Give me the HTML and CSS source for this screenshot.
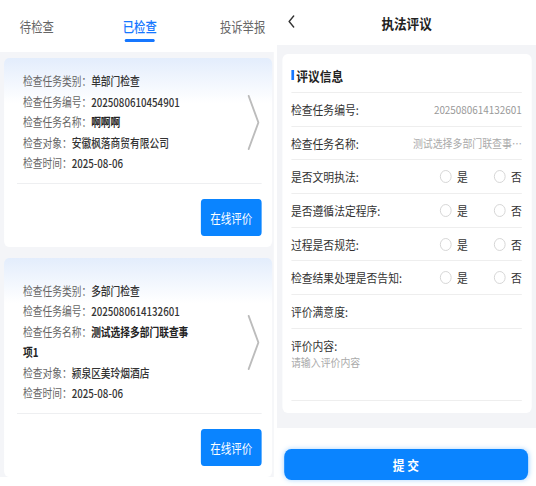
FILE: index.html
```html
<!DOCTYPE html>
<html lang="zh-CN">
<head>
<meta charset="UTF-8">
<title>执法评议</title>
<link rel="stylesheet" href="styles.css">
</head>
<body>
<div class="page">

<div class="screen screen-list">
<div class="list-inner">
<div class="tabs">
<div class="tab">待检查</div>
<div class="tab active">已检查</div>
<div class="tab">投诉举报</div>
</div>
<div class="list">
<div class="card">
<div class="card-body">
<div class="info">
<p>检查任务类别：<span class="val">单部门检查</span></p>
<p>检查任务编号：<span class="val">2025080610454901</span></p>
<p>检查任务名称：<b>啊啊啊</b></p>
<p>检查对象：<span class="val">安徽枫落商贸有限公司</span></p>
<p>检查时间：<span class="val">2025-08-06</span></p>
</div>
<svg class="arrow" viewBox="0 0 16 55"><polyline points="2,1 14,27.5 2,54" fill="none" stroke="#bcbcbc" stroke-width="2.2" stroke-linecap="round" stroke-linejoin="round"/></svg>
</div>
<div class="card-foot"><button class="btn-eval">在线评价</button></div>
</div>
<div class="card">
<div class="card-body">
<div class="info">
<p>检查任务类别：<span class="val">多部门检查</span></p>
<p>检查任务编号：<span class="val">2025080614132601</span></p>
<p>检查任务名称：<b>测试选择多部门联查事</b></p>
<p><b>项1</b></p>
<p>检查对象：<span class="val">颍泉区美玲烟酒店</span></p>
<p>检查时间：<span class="val">2025-08-06</span></p>
</div>
<svg class="arrow" viewBox="0 0 16 55"><polyline points="2,1 14,27.5 2,54" fill="none" stroke="#bcbcbc" stroke-width="2.2" stroke-linecap="round" stroke-linejoin="round"/></svg>
</div>
<div class="card-foot"><button class="btn-eval">在线评价</button></div>
</div>
</div>
</div>
</div>

<div class="screen screen-form">
<div class="form-inner">
<div class="nav">
<svg class="back" viewBox="0 0 8 13"><polyline points="6.5,1 1.5,6.5 6.5,12" fill="none" stroke="#333" stroke-width="1.6" stroke-linecap="round" stroke-linejoin="round"/></svg>
<div class="nav-title">执法评议</div>
<div></div>
</div>
<div class="form-body">
<div class="form-card">
<div class="section-title">评议信息</div>
<div class="row"><span>检查任务编号:</span><span class="value">2025080614132601</span></div>
<div class="row"><span>检查任务名称:</span><span class="value muted">测试选择多部门联查事…</span></div>
<div class="row"><span>是否文明执法:</span><div class="radios"><span class="radio"><i></i>是</span><span class="radio"><i></i>否</span></div></div>
<div class="row"><span>是否遵循法定程序:</span><div class="radios"><span class="radio"><i></i>是</span><span class="radio"><i></i>否</span></div></div>
<div class="row"><span>过程是否规范:</span><div class="radios"><span class="radio"><i></i>是</span><span class="radio"><i></i>否</span></div></div>
<div class="row"><span>检查结果处理是否告知:</span><div class="radios"><span class="radio"><i></i>是</span><span class="radio"><i></i>否</span></div></div>
<div class="row"><span>评价满意度:</span></div>
<div class="row-text">
<div>评价内容:</div>
<textarea placeholder="请输入评价内容"></textarea>
</div>
</div>
</div>
<div class="form-foot"><button class="submit">提交</button></div>
</div>
</div>

</div>
</body>
</html>
```

FILE: styles.css
```css
*{
    box-sizing:border-box;
    margin:0;
    padding:0;
}
body{
    font-family:"Noto Sans CJK SC", sans-serif;
    background:#fff;
    width:536px;
    height:486px;
    overflow:hidden;
}
.page{
    display:flex;
    gap:3px;
    height:486px;
}
.screen{
    overflow:hidden;
    flex:none;
}

/* left screen: list of checked tasks (screenshot is squeezed horizontally) */
.screen-list{
    width:274px;
    height:477px;
}
.list-inner{
    width:338px;
    height:477px;
    transform:scaleX(.81);
    transform-origin:0 0;
    display:flex;
    flex-direction:column;
}
.tabs{
    display:flex;
    height:52px;
    margin-left:-18px;
    background:#fff;
    flex:none;
}
.tab{
    flex:0 0 127px;
    text-align:center;
    font-size:14px;
    line-height:20px;
    padding-top:16px;
    color:#666;
}
.tab.active{
    color:#1677ff;
    font-weight:500;
}
.tab.active:after{
    content:'';
    display:block;
    width:37px;
    height:3px;
    border-radius:2px;
    background:#1677ff;
    margin:3px auto 0;
}
.list{
    flex:1;
    background:#f4f5f8;
    padding:6px 2px 0 5px;
    display:flex;
    flex-direction:column;
    gap:11px;
    overflow:hidden;
}
.card{
    flex:none;
    background:linear-gradient(#e3edfc, #fff 45px);
    border-radius:6px;
    padding:23px 13px 11px 0;
}
.card:first-child{
    padding-top:13px;
}
.card-body{
    display:flex;
    align-items:center;
    padding-left:23.5px;
}
.info{
    width:210px;
    font-size:12px;
    line-height:20.5px;
    color:#666;
}
.info .val{
    color:#333;
    font-weight:500;
}
.info b{
    color:#222;
}
.arrow{
    margin-left:auto;
    margin-right:2px;
    width:16px;
    height:55px;
}
.card-foot{
    margin:9px 0 0 16px;
    border-top:1px solid #eeeff1;
    padding-top:15px;
    display:flex;
    justify-content:flex-end;
}
.btn-eval{
    width:75px;
    height:37px;
    border:0;
    border-radius:4px;
    background:#0a84ff;
    color:#fff;
    font-family:inherit;
    font-size:13px;
}

/* right screen: evaluation form */
.screen-form{
    width:259px;
    height:486px;
}
.form-inner{
    width:288px;
    height:486px;
    transform:scaleX(.9);
    transform-origin:0 0;
    display:flex;
    flex-direction:column;
}
.nav{
    height:45px;
    flex:none;
    display:grid;
    grid-template-columns:1fr auto 1fr;
    align-items:center;
    padding:0 12px;
}
.back{
    width:8px;
    height:13px;
    margin-top:-3px;
}
.nav-title{
    font-size:14px;
    font-weight:700;
    color:#222;
}
.form-body{
    background:#f3f4f7;
    padding:9px 5px 15px 5.5px;
}
.form-card{
    background:#fff;
    border-radius:6px;
    padding:0 11px 12px 10px;
}
.section-title{
    height:39px;
    padding-top:4px;
    display:flex;
    align-items:center;
    border-bottom:1px solid #eee;
    font-size:13px;
    font-weight:700;
    color:#222;
}
.section-title:before{
    content:'';
    width:3px;
    height:10px;
    background:#1677ff;
    margin-right:3px;
}
.row{
    height:33.7px;
    display:flex;
    align-items:center;
    justify-content:space-between;
    border-bottom:1px solid #eee;
    font-size:12px;
    color:#333;
}
.row .value{
    font-size:11px;
    color:#999;
}
.row .value.muted{
    color:#aaa;
}
.radios{
    display:flex;
    gap:29px;
}
.radio{
    display:flex;
    align-items:center;
    gap:6px;
}
.radio i{
    width:13px;
    height:13px;
    border:1px solid #d4d4d4;
    border-radius:50%;
}
.row-text{
    height:71.7px;
    padding-top:9px;
    border-bottom:1px solid #eee;
    font-size:12px;
    line-height:16px;
    color:#333;
}
.row-text textarea{
    display:block;
    width:100%;
    height:40px;
    border:0;
    outline:none;
    resize:none;
    font-family:inherit;
    font-size:11px;
    line-height:16px;
    color:#333;
}
.row-text textarea::placeholder{
    color:#aaa;
}
.form-foot{
    flex:1;
    padding:21px 9.5px 0 8px;
}
.submit{
    width:100%;
    height:31.5px;
    border:0;
    border-radius:8px;
    background:#0a84ff;
    box-shadow:0 0 6px rgba(10,132,255,.35);
    color:#fff;
    font-family:inherit;
    font-size:13px;
    font-weight:700;
    letter-spacing:3px;
    padding-left:3px;
}
```
